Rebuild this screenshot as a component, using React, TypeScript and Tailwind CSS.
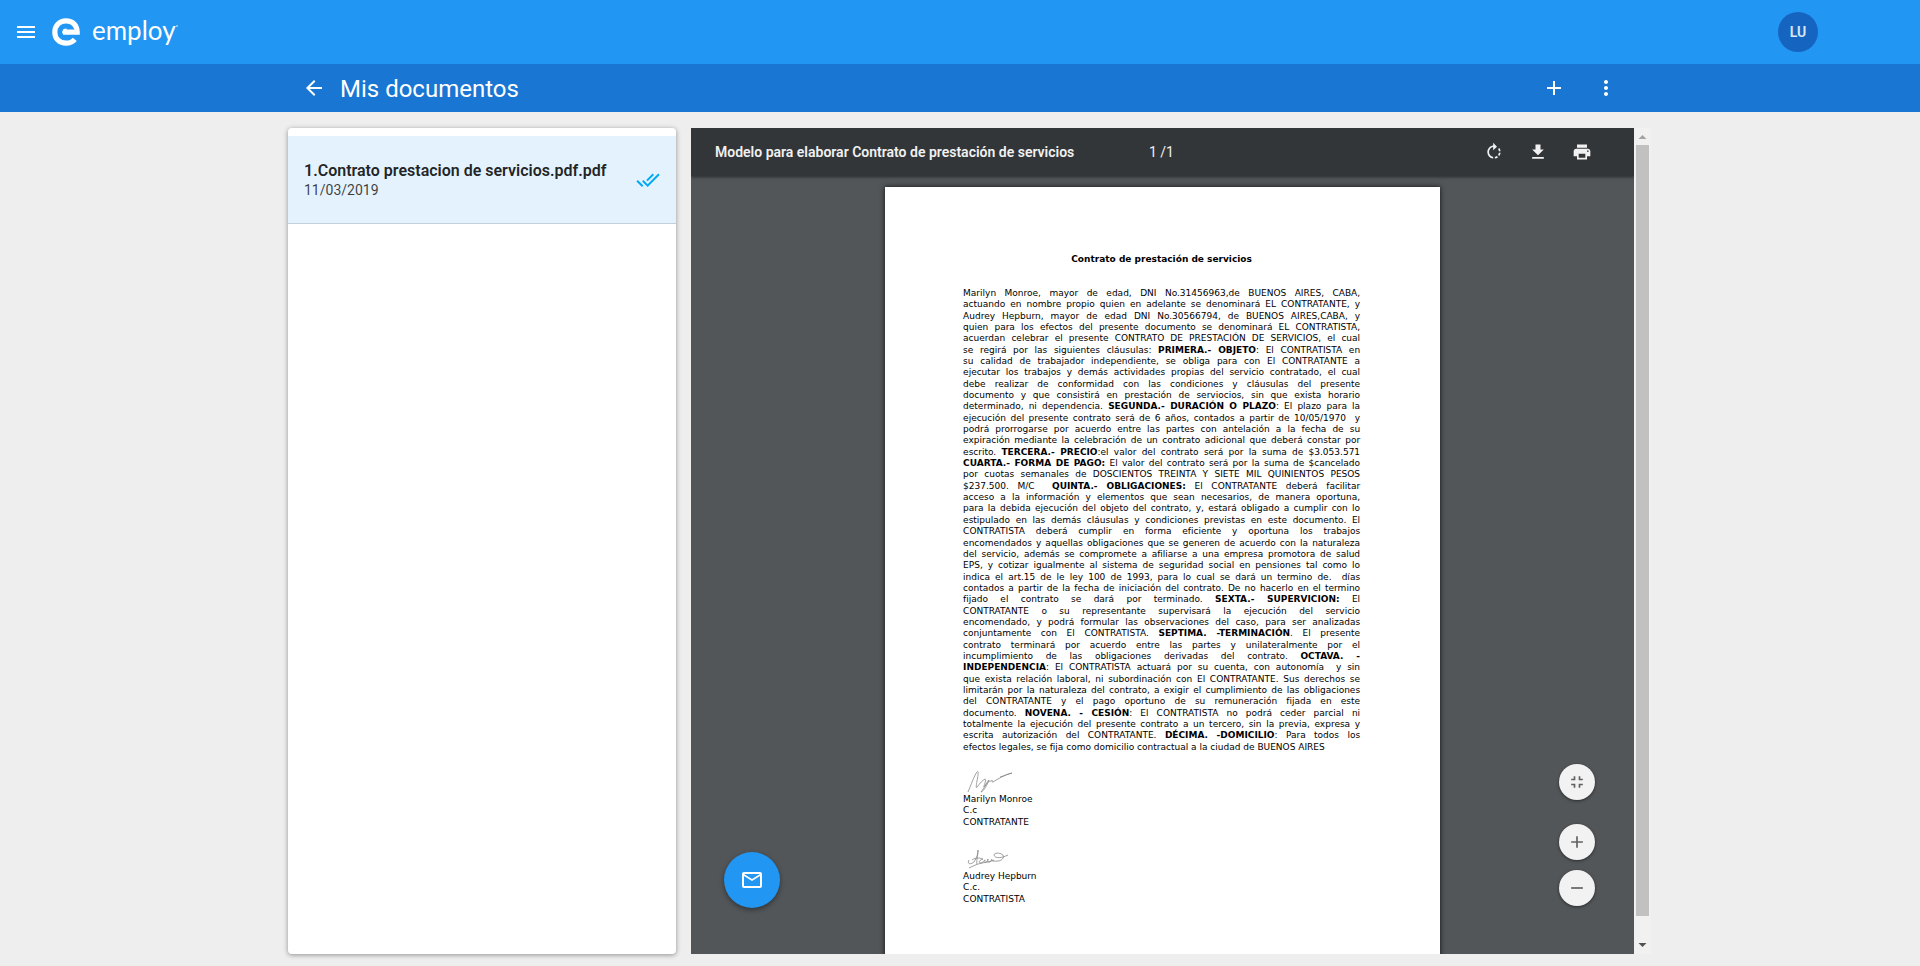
import type { ReactNode } from 'react';
import {
  MdAdd,
  MdArrowBack,
  MdDoneAll,
  MdFileDownload,
  MdFullscreenExit,
  MdMailOutline,
  MdMenu,
  MdMoreVert,
  MdPrint,
  MdRemove,
} from 'react-icons/md';

const contractLines: ReactNode[] = [
  'Marilyn Monroe, mayor de edad, DNI No.31456963,de BUENOS AIRES, CABA,',
  'actuando en nombre propio quien en adelante se denominará EL CONTRATANTE, y',
  'Audrey Hepburn, mayor de edad DNI No.30566794, de BUENOS AIRES,CABA, y',
  'quien para los efectos del presente documento se denominará EL CONTRATISTA,',
  'acuerdan celebrar el presente CONTRATO DE PRESTACIÓN DE SERVICIOS, el cual',
  <>se regirá por las siguientes cláusulas: <b>PRIMERA.- OBJETO</b>: El CONTRATISTA en</>,
  'su calidad de trabajador independiente, se obliga para con El CONTRATANTE a',
  'ejecutar los trabajos y demás actividades propias del servicio contratado, el cual',
  'debe realizar de conformidad con las condiciones y cláusulas del presente',
  'documento y que consistirá en prestación de serviocios, sin que exista horario',
  <>determinado, ni dependencia. <b>SEGUNDA.- DURACIÓN O PLAZO</b>: El plazo para la</>,
  'ejecución del presente contrato será de 6 años, contados a partir de 10/05/1970\u00a0 y',
  'podrá prorrogarse por acuerdo entre las partes con antelación a la fecha de su',
  'expiración mediante la celebración de un contrato adicional que deberá constar por',
  <>escrito. <b>TERCERA.- PRECIO</b>:el valor del contrato será por la suma de $3.053.571</>,
  <><b>CUARTA.- FORMA DE PAGO:</b> El valor del contrato será por la suma de $cancelado</>,
  'por cuotas semanales de DOSCIENTOS TREINTA Y SIETE MIL QUINIENTOS PESOS',
  <>$237.500. M/C{'\u00a0 '}<b>QUINTA.- OBLIGACIONES:</b> El CONTRATANTE deberá facilitar</>,
  'acceso a la información y elementos que sean necesarios, de manera oportuna,',
  'para la debida ejecución del objeto del contrato, y, estará obligado a cumplir con lo',
  'estipulado en las demás cláusulas y condiciones previstas en este documento. El',
  'CONTRATISTA deberá cumplir en forma eficiente y oportuna los trabajos',
  'encomendados y aquellas obligaciones que se generen de acuerdo con la naturaleza',
  'del servicio, además se compromete a afiliarse a una empresa promotora de salud',
  'EPS, y cotizar igualmente al sistema de seguridad social en pensiones tal como lo',
  'indica el art.15 de le ley 100 de 1993, para lo cual se dará un termino de.\u00a0 días',
  'contados a partir de la fecha de iniciación del contrato. De no hacerlo en el termino',
  <>fijado el contrato se dará por terminado. <b>SEXTA.- SUPERVICION:</b> El</>,
  'CONTRATANTE o su representante supervisará la ejecución del servicio',
  'encomendado, y podrá formular las observaciones del caso, para ser analizadas',
  <>conjuntamente con El CONTRATISTA. <b>SEPTIMA. -TERMINACIÓN</b>. El presente</>,
  'contrato terminará por acuerdo entre las partes y unilateralmente por el',
  <>incumplimiento de las obligaciones derivadas del contrato. <b>OCTAVA. -</b></>,
  <><b>INDEPENDENCIA</b>: El CONTRATISTA actuará por su cuenta, con autonomía{'\u00a0 '}y sin</>,
  'que exista relación laboral, ni subordinación con El CONTRATANTE. Sus derechos se',
  'limitarán por la naturaleza del contrato, a exigir el cumplimiento de las obligaciones',
  'del CONTRATANTE y el pago oportuno de su remuneración fijada en este',
  <>documento. <b>NOVENA. - CESIÓN</b>: El CONTRATISTA no podrá ceder parcial ni</>,
  'totalmente la ejecución del presente contrato a un tercero, sin la previa, expresa y',
  <>escrita autorización del CONTRATANTE. <b>DÉCIMA. -DOMICILIO</b>: Para todos los</>,
  'efectos legales, se fija como domicilio contractual a la ciudad de BUENOS AIRES',
];

function Logo() {
  return (
    <a href="#" className="flex items-center text-white" aria-label="employ">
      <svg className="h-7 w-7" viewBox="0 0 28 28" fill="none" stroke="currentColor">
        <path d="M11 14.2H25.2C25.2 7 20.5 2.8 14 2.8S2.8 7.6 2.8 14.2S7.6 25.2 14 25.2C17.6 25.2 20.6 24 22.8 21.4" strokeWidth="5.2" />
        <path d="M11 15.4c-.4-2.6 1-4.2 3.6-4.2" strokeWidth="1.6" />
      </svg>
      <span className="ml-3 pb-1 font-['Lato'] text-[26px] leading-8">employ</span>
      <span className="mb-3 h-0.5 w-0.5 rounded-full bg-white/60" />
    </a>
  );
}

function Header() {
  return (
    <header className="flex h-16 shrink-0 items-center bg-[#2196f3] pl-3.5 pr-[102px] text-white">
      <button type="button" aria-label="Menú" className="mr-3.5">
        <MdMenu size={24} />
      </button>
      <Logo />
      <button type="button" className="ml-auto h-10 w-10 rounded-full bg-[#1565c0] text-sm font-semibold text-white/85">
        LU
      </button>
    </header>
  );
}

function TitleBar() {
  return (
    <div className="h-12 shrink-0 bg-[#1976d2] text-white">
      <div className="mx-auto flex h-full w-[70%] items-center px-3.5">
        <button type="button" aria-label="Volver">
          <MdArrowBack size={24} />
        </button>
        <h1 className="ml-3.5 pt-0.5 text-2xl leading-8">Mis documentos</h1>
        <button type="button" aria-label="Agregar" className="ml-auto">
          <MdAdd size={24} />
        </button>
        <button type="button" aria-label="Más opciones" className="ml-7">
          <MdMoreVert size={24} />
        </button>
      </div>
    </div>
  );
}

function DocumentList() {
  return (
    <aside className="w-[388px] shrink-0 rounded-sm bg-white pt-2 shadow-[0_1px_5px_rgba(0,0,0,0.4)]">
      <ul>
        <li className="border-b border-[#c0d0dc] bg-[#e3f2fd]">
          <a href="#" className="flex h-[87px] items-center justify-between px-4">
            <div className="py-0.5">
              <p className="text-base leading-5 font-semibold text-black/87">1.Contrato prestacion de servicios.pdf.pdf</p>
              <p className="text-sm leading-[18px] text-black/75">11/03/2019</p>
            </div>
            <MdDoneAll size={24} className="text-[#03a9f4]" />
          </a>
        </li>
      </ul>
    </aside>
  );
}

function ViewerToolbar() {
  return (
    <div className="relative z-10 flex h-12 shrink-0 items-center bg-[#323639] pl-6 pr-10 text-[#f1f1f1] shadow-[0_1px_3px_rgba(0,0,0,0.5)]">
      <h2 className="w-[434px] text-sm font-semibold">Modelo para elaborar Contrato de prestación de servicios</h2>
      <span className="text-sm">1 /1</span>
      <div className="ml-auto flex gap-5">
        <button type="button" aria-label="Rotar" className="flex h-6 w-6 items-center justify-center">
          <svg width="20" height="20" viewBox="0 0 24 24" fill="currentColor">
            <path d="M15.55 5.55L11 1v3.07C7.06 4.56 4 7.92 4 12s3.05 7.44 7 7.93v-2.02c-2.84-.48-5-2.94-5-5.91s2.16-5.43 5-5.91V10l4.55-4.45zM19.93 11c-.17-1.39-.72-2.73-1.62-3.89l-1.42 1.42c.54.75.88 1.6 1.02 2.47h2.02zM13 17.9v2.02c1.39-.17 2.74-.71 3.9-1.61l-1.44-1.44c-.75.54-1.59.89-2.46 1.03zm3.89-2.42l1.42 1.41c.9-1.16 1.45-2.5 1.62-3.89h-2.02c-.14.87-.48 1.72-1.02 2.48z" />
          </svg>
        </button>
        <button type="button" aria-label="Descargar" className="flex h-6 w-6 items-center justify-center">
          <MdFileDownload size={20} />
        </button>
        <button type="button" aria-label="Imprimir" className="flex h-6 w-6 items-center justify-center">
          <MdPrint size={20} />
        </button>
      </div>
    </div>
  );
}

function ContractPage() {
  return (
    <article className="mx-auto mt-[11px] h-[785px] w-[555px] bg-white pt-[67px] pr-20 pl-[78px] font-['DejaVu_Sans',Verdana,sans-serif] text-[9px] leading-[11px] text-black shadow-[0_0_5px_rgba(0,0,0,0.8)] [font-variant-ligatures:none]">
      <h3 className="text-center font-bold">Contrato de prestación de servicios</h3>
      <div className="mt-[23px] grid h-[465px] auto-rows-fr">
        {contractLines.map((line, i) => (
          <p key={i} className="h-[11px] text-justify [text-align-last:justify] last:[text-align-last:left]">
            {line}
          </p>
        ))}
      </div>
      <svg className="mt-4 ml-1 block h-6 w-12" viewBox="0 0 48 24" fill="none" stroke="#888" strokeWidth="0.8">
        <path d="M1 23C4 16 7 7 10 3C12 1 11 7 10 12C9 17 9 20 10 18C13 14 16 11 18 10C20 11 16 18 17 18C19 16 21 11 22 11C20 16 17 22 14 23C18 18 20 12 24 12C27 10 24 14 26 13C31 10 37 6 45 4C40 5 37 7 33 8" />
      </svg>
      <div className="grid h-[35px] auto-rows-fr pt-px">
        <p>Marilyn Monroe</p>
        <p>C.c</p>
        <p>CONTRATANTE</p>
      </div>
      <svg className="mt-[21px] ml-1 block h-5 w-12" viewBox="0 0 48 20" fill="none" stroke="#888" strokeWidth="0.8">
        <path d="M2 11C0 15 3 16 7 13C10 9 11 4 11 1C11 7 9 13 10 15M5 11C9 8 13 9 16 10C12 11 11 14 14 14C16 14 18 10 18 11C17 15 20 14 21 10C20 15 23 13 24 12C26 8 23 12 26 12C33 13 38 10 36 6C32 3 27 4 27 6C28 10 35 9 41 6M2 19C6 17 10 15 15 14C20 13 23 13 27 11" />
      </svg>
      <div className="grid h-9 auto-rows-fr pt-0.5">
        <p>Audrey Hepburn</p>
        <p>C.c.</p>
        <p>CONTRATISTA</p>
      </div>
    </article>
  );
}

function ZoomControls() {
  return (
    <div className="absolute right-[39px] bottom-12 z-10 flex flex-col text-[#616161]">
      <button type="button" aria-label="Ajustar a la página" className="flex h-9 w-9 items-center justify-center rounded-full bg-[#f2f2f2] shadow-[0_1px_3px_rgba(0,0,0,0.5)]">
        <MdFullscreenExit size={20} />
      </button>
      <button type="button" aria-label="Acercar" className="mt-6 flex h-9 w-9 items-center justify-center rounded-full bg-[#f2f2f2] shadow-[0_1px_3px_rgba(0,0,0,0.5)]">
        <MdAdd size={20} />
      </button>
      <button type="button" aria-label="Alejar" className="mt-2.5 flex h-9 w-9 items-center justify-center rounded-full bg-[#f2f2f2] shadow-[0_1px_3px_rgba(0,0,0,0.5)]">
        <MdRemove size={20} />
      </button>
    </div>
  );
}

function ScrollTrack() {
  return (
    <div className="flex w-[17px] shrink-0 flex-col items-center bg-[#f1f1f1]">
      <svg className="h-[17px] w-[17px]" viewBox="0 0 17 17" fill="#a3a3a3">
        <path d="M4.5 11h8l-4-4z" />
      </svg>
      <div className="w-[13px] flex-1 bg-[#c1c1c1]" />
      <div className="h-[21px]" />
      <svg className="h-[17px] w-[17px]" viewBox="0 0 17 17" fill="#505050">
        <path d="M4.5 6h8l-4 4z" />
      </svg>
    </div>
  );
}

export default function App() {
  return (
    <div className="flex h-screen flex-col overflow-hidden bg-[#eee] font-['Roboto',sans-serif]">
      <Header />
      <TitleBar />
      <main className="flex min-h-0 flex-1 pt-4 pr-[14%] pb-3 pl-[15%]">
        <DocumentList />
        <section className="ml-[15px] flex min-w-0 flex-1">
          <div className="relative flex min-w-0 flex-1 flex-col overflow-hidden bg-[#525659]">
            <ViewerToolbar />
            <div className="min-h-0 flex-1 overflow-hidden">
              <ContractPage />
            </div>
            <button type="button" aria-label="Enviar por correo" className="absolute bottom-[46px] left-[33px] z-10 flex h-14 w-14 items-center justify-center rounded-full bg-[#2196f3] text-white shadow-[0_2px_5px_rgba(0,0,0,0.4)]">
              <MdMailOutline size={24} />
            </button>
            <ZoomControls />
          </div>
          <ScrollTrack />
        </section>
      </main>
    </div>
  );
}
